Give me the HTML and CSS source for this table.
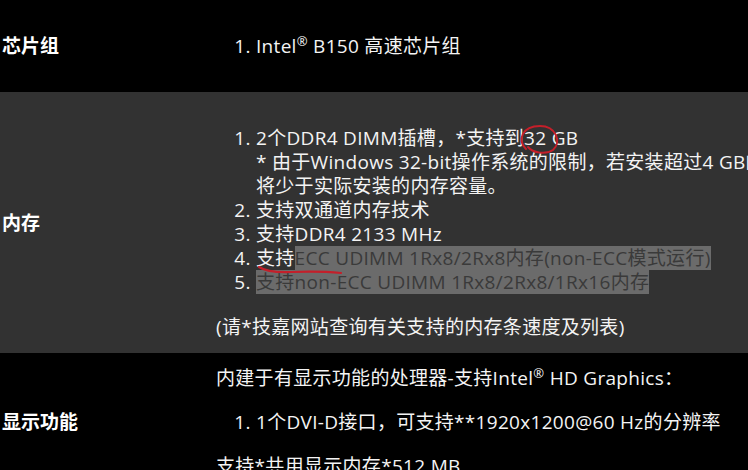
FILE: index.html
```html
<!DOCTYPE html>
<html lang="zh-CN">
<head>
<meta charset="utf-8">
<title>规格</title>
<link rel="stylesheet" href="styles.css">
</head>
<body>
<div class="spec">
  <div class="row row-dark row-chipset">
    <div class="label">芯片组</div>
    <div class="value">
      <ol class="list">
        <li>Intel<sup>®</sup> B150 高速芯片组</li>
      </ol>
    </div>
  </div>
  <div class="row row-grey row-memory">
    <div class="label">内存</div>
    <div class="value value-memory">
      <ol class="list">
        <li>2个DDR4 DIMM插槽，*支持到32 GB<br>* 由于Windows 32-bit操作系统的限制，若安装超过4 GB的物理内存，实际显示的内存容量<br>将少于实际安装的内存容量。</li>
        <li>支持双通道内存技术</li>
        <li>支持DDR4 2133 MHz</li>
        <li>支持<span class="hl">ECC UDIMM 1Rx8/2Rx8内存(non-ECC模式运行) </span></li>
        <li><span class="hl">支持non-ECC UDIMM 1Rx8/2Rx8/1Rx16内存</span></li>
      </ol>
      <p class="note">(请*技嘉网站查询有关支持的内存条速度及列表)</p>
    </div>
  </div>
  <div class="row row-dark row-display">
    <div class="label">显示功能</div>
    <div class="value">
      <p class="para">内建于有显示功能的处理器-支持Intel<sup>®</sup> HD Graphics：</p>
      <ol class="list list-gap">
        <li>1个DVI-D接口，可支持**1920x1200@60 Hz的分辨率</li>
      </ol>
      <p class="para">支持*共用显示内存*512 MB</p>
    </div>
  </div>
</div>
<svg class="marks" width="748" height="470" viewBox="0 0 748 470">
  <path d="M 526 149 C 517 140, 522 126, 540 126 C 556 126, 562 142, 553 150 C 546 155, 533 153, 528 147" fill="none" stroke="#c41f2a" stroke-width="2" stroke-linecap="round"/>
  <path d="M 259 267 Q 268 273 292 272 Q 320 271 341 273" fill="none" stroke="#c41f2a" stroke-width="2.2" stroke-linecap="round"/>
</svg>
</body>
</html>
```

FILE: styles.css
```css
html, body {
  margin: 0;
  padding: 0;
  background: #000;
}
body {
  width: 748px;
  height: 470px;
  overflow: hidden;
  position: relative;
  font-family: "Open Sans", "Noto Sans CJK SC", sans-serif;
  font-size: 19px;
  line-height: 24px;
  letter-spacing: 0.3px;
  color: #f4f4f4;
}
.spec {
  display: flex;
  flex-direction: column;
}
.row {
  display: grid;
  grid-template-columns: 216px 1fr;
  align-items: center;
}
.row-dark { background: #000; }
.row-grey { background: #323232; }
.row-chipset { height: 92px; }
.value-memory { padding: 34px 0 14px; }
.row-display { padding: 13px 0; }
.label {
  padding-left: 2px;
  font-weight: 700;
  color: #fff;
  letter-spacing: 0;
}
.value {
  white-space: nowrap;
  min-width: 0;
}
.list {
  margin: 0;
  padding-left: 40px;
}
.note {
  margin: 21px 0 0;
}
.para {
  margin: 0;
}
.list-gap {
  margin: 20px 0;
}
sup {
  font-size: 13px;
  line-height: 0;
  vertical-align: 7px;
}
.hl {
  display: inline-block;
  background: #6b6b6b;
  color: #3a3a3a;
  line-height: 24px;
  vertical-align: top;
}
.marks {
  position: absolute;
  left: 0;
  top: 0;
  pointer-events: none;
}
```
